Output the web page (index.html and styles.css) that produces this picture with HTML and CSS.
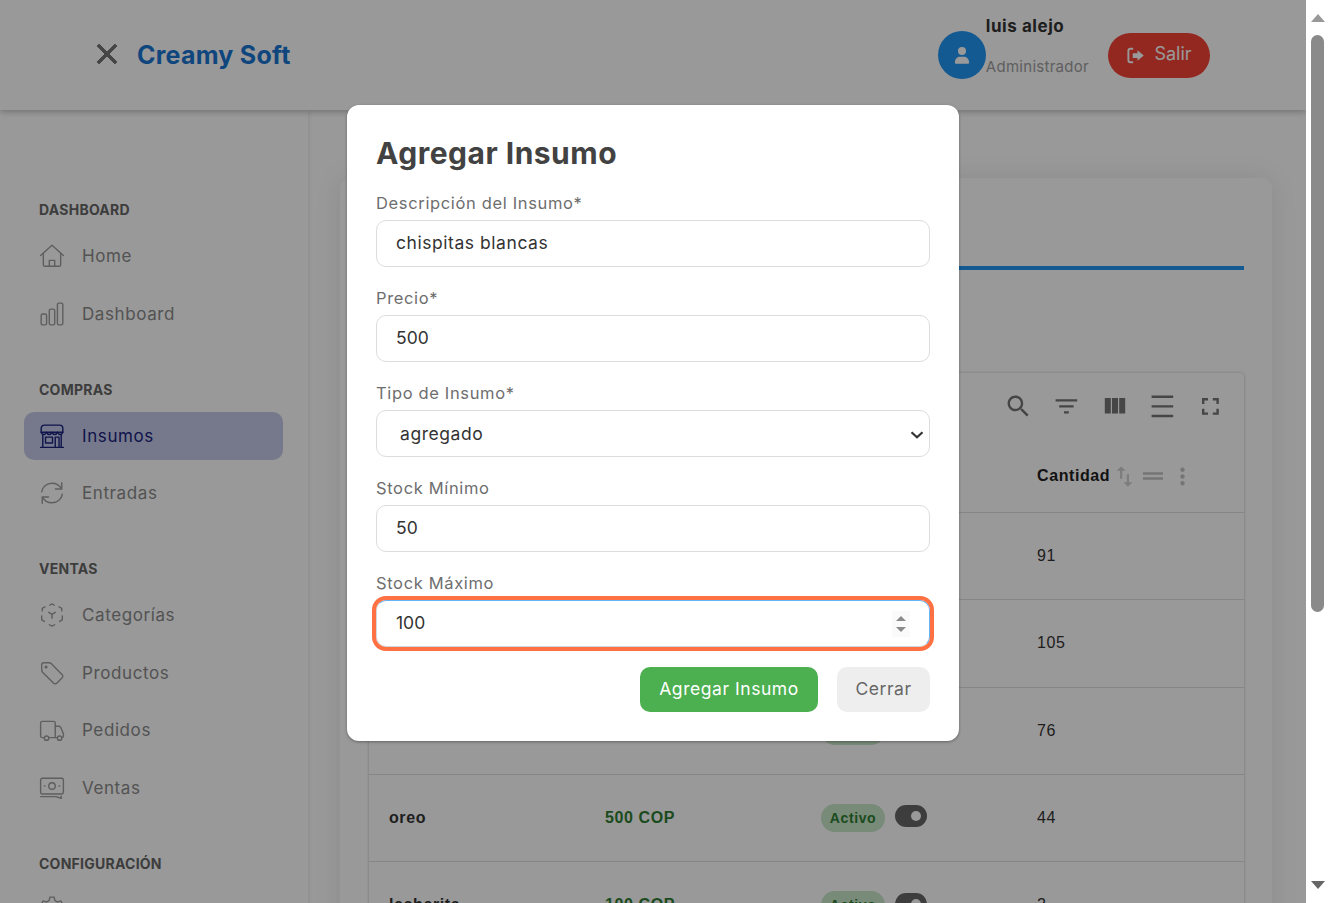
FILE: index.html
```html
<!DOCTYPE html>
<html lang="es">
<head>
    <meta charset="UTF-8">
    <meta name="viewport" content="width=device-width, initial-scale=1.0">
    <title>Creamy Soft - Insumos</title>
    <link rel="stylesheet" href="styles.css">
</head>
<body>
<div class="window">
    <div class="page">
        <header class="topbar">
            <div class="brand">
                <svg class="brand-close" viewBox="0 0 24 24"><path d="M19 6.41 17.59 5 12 10.59 6.41 5 5 6.41 10.59 12 5 17.59 6.41 19 12 13.41 17.59 19 19 17.59 13.41 12z"/></svg>
                <span class="brand-name">Creamy Soft</span>
            </div>
            <div class="account">
                <div class="avatar">
                    <svg viewBox="0 0 24 24"><circle cx="12" cy="7.6" r="4.4"/><path d="M4.2 20.5c0-4.2 2.8-6.6 5.2-6.6h5.2c2.4 0 5.2 2.4 5.2 6.6 0 .7-.5 1-1 1H5.2c-.5 0-1-.3-1-1z"/></svg>
                </div>
                <div class="user">
                    <span class="user-name">luis alejo</span>
                    <span class="user-role">Administrador</span>
                </div>
                <button class="logout">
                    <svg viewBox="0 0 24 24"><path class="logout-door" d="M9 3.5H5.5A2.5 2.5 0 0 0 3 6v12a2.500 2.500 0 0 0 2.500 2.500H9"/><path d="M14.500 5.500 22.500 12l-8 6.500V15H8.500V9h6z"/></svg>
                    <span>Salir</span>
                </button>
            </div>
        </header>

        <div class="body-row">
            <aside class="sidebar">
                <section class="nav-group">
                    <h4>DASHBOARD</h4>
                    <a class="nav-item">
                        <svg viewBox="0 0 24 24"><path d="M1.500 11.500 12 2l10.500 9.500"/><path d="M4 9.500V20a1.500 1.500 0 0 0 1.500 1.500h13A1.500 1.500 0 0 0 20 20V9.500"/><path d="M9.500 21.500V16h5v5.500"/></svg>
                        Home
                    </a>
                    <a class="nav-item">
                        <svg viewBox="0 0 24 24"><rect x="2" y="12" width="5" height="10" rx="1.300"/><rect x="9.500" y="7.500" width="5" height="14.500" rx="1.300"/><rect x="17" y="2" width="5" height="20" rx="1.300"/></svg>
                        Dashboard
                    </a>
                </section>
                <section class="nav-group">
                    <h4>COMPRAS</h4>
                    <a class="nav-item active">
                        <svg viewBox="0 0 24 24"><path d="M5 2h14a3 3 0 0 1 3 3v3.500H2V5a3 3 0 0 1 3-3z"/><path d="M2 8.500c.6 2.800 3.800 2.800 5 0 1 2.800 4 2.800 5 0 1 2.800 4 2.800 5 0 1.200 2.800 4.400 2.800 5 0"/><path d="M3.500 11v11M20.500 11v11M1.500 22.500h21"/><rect x="6" y="13" width="6.500" height="5.500"/><path d="M15 22v-9h3.500v9"/></svg>
                        Insumos
                    </a>
                    <a class="nav-item">
                        <svg viewBox="0 0 24 24"><path d="M2.500 11C3 6.500 7 3 12 3c3.700 0 6.800 1.800 8.500 4.800"/><path d="M21 2.500v5.800h-5.800"/><path d="M21.500 13c-.5 4.500-4.500 8-9.500 8-3.700 0-6.800-1.800-8.500-4.800"/><path d="M3 21.500v-5.800h5.800"/></svg>
                        Entradas
                    </a>
                </section>
                <section class="nav-group">
                    <h4>VENTAS</h4>
                    <a class="nav-item">
                        <svg viewBox="0 0 24 24"><path d="M9.800 3 12 1.800 14.200 3"/><path d="M18.500 4.500 21 5.800v2.500"/><path d="M21.500 12.800v3.700l-2.500 1.400"/><path d="M14.500 21 12 22.300 9.500 21"/><path d="M5 17.900l-2.500-1.400v-3.700"/><path d="M3 8.300V5.800l2.500-1.300"/><path d="M9 9.500l3 2 3-2M12 11.500v3.500"/></svg>
                        Categorías
                    </a>
                    <a class="nav-item">
                        <svg viewBox="0 0 24 24"><path d="M2.500 4.200v5.100c0 .8.300 1.400.8 1.900l10 10c1 1 2.400 1 3.300 0l4.600-4.600c1-1 1-2.300 0-3.300l-10-10c-.5-.5-1.200-.8-1.900-.8H4.200c-1 0-1.700.7-1.700 1.700z"/><circle cx="6.500" cy="6.500" r=".8"/></svg>
                        Productos
                    </a>
                    <a class="nav-item">
                        <svg viewBox="0 0 24 24"><path d="M5 19H3a1.500 1.500 0 0 1-1.500-1.500V5.500A1.500 1.500 0 0 1 3 4h10.500A1.500 1.500 0 0 1 15 5.500V19H9"/><path d="M15 8.500h3.500c.6 0 1 .3 1.300.8l2.700 6V17.500c0 .8-.7 1.500-1.500 1.500H21"/><path d="M15 19h2"/><circle cx="7" cy="19.500" r="2"/><circle cx="19" cy="19.500" r="2"/></svg>
                        Pedidos
                    </a>
                    <a class="nav-item">
                        <svg viewBox="0 0 24 24"><rect x="1.500" y="3" width="21" height="14.500" rx="1.500"/><circle cx="12" cy="10.200" r="3"/><path d="M5 10.200h.5M18.500 10.200h.5"/><path d="M1.500 20h14l5 1.500V19.500"/></svg>
                        Ventas
                    </a>
                </section>
                <section class="nav-group">
                    <h4>CONFIGURACIÓN</h4>
                    <a class="nav-item nav-gear">
                        <svg viewBox="0 0 24 24"><circle cx="12" cy="12" r="3"/><path d="M10 2h4l.6 3 2.600 1.500 2.900-1 2 3.500-2.300 2v2l2.300 2-2 3.500-2.900-1-2.600 1.500-.6 3h-4l-.6-3-2.600-1.500-2.900 1-2-3.500 2.300-2v-2l-2.300-2 2-3.500 2.900 1L9.400 5z"/></svg>
                    </a>
                </section>
            </aside>

            <main class="content">
                <div class="content-inner">
                    <div class="card">
                        <div class="tabs">
                            <span class="tab">Insumos</span>
                        </div>
                        <div class="table-card">
                            <div class="table-tools">
                                <svg viewBox="0 0 24 24"><path d="M15.500 14h-.79l-.28-.27C15.410 12.590 16 11.110 16 9.500 16 5.910 13.090 3 9.500 3S3 5.910 3 9.500 5.910 16 9.500 16c1.610 0 3.090-.59 4.230-1.570l.27.28v.79l5 4.990L20.490 19l-4.990-5zm-6 0C7.010 14 5 11.990 5 9.500S7.010 5 9.500 5 14 7.010 14 9.500 11.990 14 9.500 14z"/></svg>
                                <svg viewBox="0 0 24 24"><path d="M10 18h4v-2h-4v2zM3 6v2h18V6H3zm3 7h12v-2H6v2z"/></svg>
                                <svg viewBox="0 0 24 24"><path d="M10 18h5V5h-5v13zm-6 0h5V5H4v13zM16 5v13h5V5h-5z"/></svg>
                                <svg viewBox="0 0 24 24"><path d="M3 3h18v2H3zM3 11h18v2H3zM3 19h18v2H3z"/></svg>
                                <svg viewBox="0 0 24 24"><path d="M7 14H5v5h5v-2H7v-3zm-2-4h2V7h3V5H5v5zm12 7h-3v2h5v-5h-2v3zM14 5v2h3v3h2V5h-5z"/></svg>
                            </div>
                            <div class="row head">
                                <span>Nombre</span>
                                <span>Precio</span>
                                <span>Estado</span>
                                <span class="head-cell">Cantidad
                                    <svg class="sort" viewBox="0 0 24 24"><path d="M16 17.010V10h-2v7.010h-3L15 21l4-3.990h-3zM9 3 5 6.990h3V14h2V6.990h3L9 3z"/></svg>
                                    <svg class="drag" viewBox="0 0 24 24"><path d="M20 9H4v2h16V9zM4 15h16v-2H4v2z"/></svg>
                                    <svg class="more" viewBox="0 0 24 24"><path d="M12 8c1.100 0 2-.9 2-2s-.9-2-2-2-2 .9-2 2 .9 2 2 2zm0 2c-1.100 0-2 .9-2 2s.9 2 2 2 2-.9 2-2-.9-2-2-2zm0 6c-1.100 0-2 .9-2 2s.9 2 2 2 2-.9 2-2-.9-2-2-2z"/></svg>
                                </span>
                            </div>
                            <div class="row">
                                <b>leche</b><span class="price">300 COP</span>
                                <span class="state"><i class="chip">Activo</i><i class="switch"></i></span><span>91</span>
                            </div>
                            <div class="row">
                                <b>azucar</b><span class="price">200 COP</span>
                                <span class="state"><i class="chip">Activo</i><i class="switch"></i></span><span>105</span>
                            </div>
                            <div class="row">
                                <b>fresa</b><span class="price">400 COP</span>
                                <span class="state"><i class="chip">Activo</i><i class="switch"></i></span><span>76</span>
                            </div>
                            <div class="row">
                                <b>oreo</b><span class="price">500 COP</span>
                                <span class="state"><i class="chip">Activo</i><i class="switch"></i></span><span>44</span>
                            </div>
                            <div class="row">
                                <b>lecherita</b><span class="price">100 COP</span>
                                <span class="state"><i class="chip">Activo</i><i class="switch"></i></span><span>2</span>
                            </div>
                        </div>
                    </div>
                </div>
            </main>
        </div>

        <div class="overlay">
            <form class="modal">
                <h2>Agregar Insumo</h2>
                <div class="field">
                    <label>Descripción del Insumo*</label>
                    <input class="text-input" type="text" value="chispitas blancas">
                </div>
                <div class="field">
                    <label>Precio*</label>
                    <input type="text" value="500">
                </div>
                <div class="field">
                    <label>Tipo de Insumo*</label>
                    <div class="control-wrap">
                        <select><option>agregado</option></select>
                        <svg class="chevron" viewBox="0 0 14 8"><path d="M1.500 1.300 7 6.300l5.500-5"/></svg>
                    </div>
                </div>
                <div class="field">
                    <label>Stock Mínimo</label>
                    <input type="text" value="50">
                </div>
                <div class="field last">
                    <label>Stock Máximo</label>
                    <div class="control-wrap">
                        <input class="focused" type="text" value="100">
                        <span class="stepper"><i class="up"></i><i class="down"></i></span>
                    </div>
                </div>
                <div class="modal-actions">
                    <button type="button" class="btn-add">Agregar Insumo</button>
                    <button type="button" class="btn-close">Cerrar</button>
                </div>
            </form>
        </div>
    </div>

    <div class="scrollbar">
        <i class="arrow-up"></i>
        <div class="thumb-track"><div class="thumb"></div></div>
        <i class="arrow-down"></i>
    </div>
</div>
</body>
</html>
```

FILE: styles.css
```css
* {
    box-sizing: border-box;
}
html, body {
    margin: 0;
    height: 100%;
    overflow: hidden;
}
body {
    font-family: Inter, "Open Sans", sans-serif;
    background: #fff;
    color: #333;
}
.window {
    display: flex;
    height: 903px;
}
.page {
    position: relative;
    flex: 1;
    min-width: 0;
    overflow: hidden;
    background: #fff;
}

/* top bar */
.topbar {
    height: 110px;
    display: flex;
    align-items: center;
    justify-content: space-between;
    padding: 0 96px 0 90px;
    background: #fff;
    box-shadow: 0 2px 6px rgba(0, 0, 0, 0.25);
    position: relative;
    z-index: 1;
}
.brand {
    display: flex;
    align-items: center;
    gap: 13px;
}
.brand-close {
    width: 34px;
    height: 34px;
    margin-top: -2px;
    fill: #757575;
    stroke: #757575;
    stroke-width: 0.7;
}
.brand-name {
    font-size: 25px;
    font-weight: 700;
    letter-spacing: 0.25px;
    color: #1976d2;
}
.account {
    display: flex;
    align-items: center;
}
.avatar {
    width: 48px;
    height: 48px;
    border-radius: 50%;
    background: #2196f3;
    display: flex;
    align-items: center;
    justify-content: center;
}
.avatar svg {
    width: 22px;
    height: 22px;
    fill: #fff;
}
.user {
    display: flex;
    flex-direction: column;
    gap: 21px;
    margin-right: 19px;
    margin-top: -17px;
}
.user-name {
    font-size: 17px;
    line-height: 20px;
    font-weight: 700;
    letter-spacing: 0.55px;
    color: #333;
}
.user-role {
    font-size: 15px;
    line-height: 20px;
    letter-spacing: 0.28px;
    color: #9e9e9e;
}
.logout {
    width: 102px;
    height: 45px;
    border: none;
    border-radius: 23px;
    background: #f44336;
    color: #fff;
    font-family: inherit;
    font-size: 18px;
    display: flex;
    align-items: center;
    justify-content: center;
    gap: 9px;
    padding: 0;
}
.logout span {
    margin-top: -3px;
}
.logout svg {
    width: 19px;
    height: 19px;
    fill: #fff;
}
.logout-door {
    fill: none;
    stroke: #fff;
    stroke-width: 2.4;
}

/* sidebar */
.body-row {
    display: flex;
    height: 1400px;
}
.sidebar {
    width: 308px;
    flex: none;
    padding: 89px 25px 0 24px;
    background: #fff;
    box-shadow: 2px 0 3px rgba(0, 0, 0, 0.06);
    position: relative;
}
.nav-group {
    margin-bottom: 41px;
}
.nav-group h4 {
    margin: 0 0 11px;
    padding-left: 15px;
    font-size: 14px;
    line-height: 22px;
    font-weight: 700;
    letter-spacing: 0.25px;
    color: #666;
}
.nav-item {
    height: 48px;
    margin-bottom: 9.500px;
    display: flex;
    align-items: center;
    gap: 17px;
    padding-left: 15px;
    border-radius: 10px;
    font-size: 17px;
    letter-spacing: 0.6px;
    color: #8a8a8a;
}
.nav-item svg {
    width: 26px;
    height: 26px;
    flex: none;
    fill: none;
    stroke: #9e9e9e;
    stroke-width: 1.3;
    stroke-linecap: round;
    stroke-linejoin: round;
}
.nav-item.active {
    background: #c5cae9;
    color: #1a237e;
}
.nav-item.active svg {
    stroke: #1a237e;
}
.nav-item:last-child {
    margin-bottom: 0;
}
.nav-gear {
    margin-top: -2px;
}

/* main content */
.content {
    flex: 1;
    min-width: 0;
    padding: 40px 5px 0 4px;
}
.content-inner {
    height: 100%;
    overflow: hidden;
    padding: 28px 29px 0 28px;
    background: #fff;
}
.card {
    height: 100%;
    padding: 0 28px 0 29px;
    border-radius: 10px;
    background: #fff;
    box-shadow: 0 0 28px rgba(0, 0, 0, 0.09);
}
.tabs {
    height: 92px;
    border-bottom: 4px solid #2196f3;
    margin-bottom: 103px;
    display: flex;
    align-items: flex-end;
    padding: 0 0 12px 20px;
    color: #1976d2;
    font-size: 16px;
}
.table-card {
    border-radius: 4px;
    background: #fff;
    box-shadow: 0 0 3px rgba(0, 0, 0, 0.25);
    font-family: "Liberation Sans", Arial, sans-serif;
    font-size: 16px;
    letter-spacing: 0.6px;
}
.table-tools {
    height: 67px;
    display: flex;
    justify-content: flex-end;
    align-items: center;
    gap: 19.200px;
    padding-right: 19.600px;
}
.table-tools svg {
    width: 28.800px;
    height: 28.800px;
    fill: #757575;
}
.row {
    height: 87.250px;
    display: grid;
    grid-template-columns: 216px 216px 216px 1fr;
    align-items: center;
    padding-left: 20px;
    border-bottom: 1px solid #e0e0e0;
    color: #333;
}
.row b {
    font-weight: 700;
    color: #333;
}
.row.head {
    height: 73px;
    font-weight: 700;
    color: #212121;
}
.head-cell {
    display: flex;
    align-items: center;
}
.sort {
    width: 27px;
    height: 27px;
    margin-left: 1px;
    fill: #d0d0d0;
}
.drag {
    width: 30px;
    height: 30px;
    fill: #c4c4c4;
}
.more {
    width: 27px;
    height: 27px;
    margin-left: 1px;
    fill: #c4c4c4;
}
.price {
    font-weight: 700;
    color: #2e7d32;
}
.state {
    display: flex;
    align-items: center;
    gap: 10px;
}
.chip {
    width: 64px;
    height: 28px;
    line-height: 28px;
    text-align: center;
    border-radius: 14px;
    background: #c8e6c9;
    color: #2e7d32;
    font-size: 14px;
    font-style: normal;
    font-weight: 700;
}
.switch {
    position: relative;
    width: 32px;
    height: 22px;
    border-radius: 11px;
    background: #666;
    margin-top: -3px;
}
.switch::after {
    content: "";
    position: absolute;
    top: 6px;
    right: 6px;
    width: 10px;
    height: 10px;
    border-radius: 50%;
    background: #fff;
}

/* modal */
.overlay {
    position: absolute;
    inset: 0;
    z-index: 2;
    display: flex;
    justify-content: center;
    align-items: flex-start;
    padding-top: 105px;
    background: rgba(0, 0, 0, 0.4);
}
.modal {
    width: 612px;
    height: 636px;
    padding: 26px 29px 0;
    border-radius: 12px;
    background: #fff;
    box-shadow: 0 1px 3px rgba(0, 0, 0, 0.35);
}
.modal h2 {
    margin: 0 0 18px;
    font-size: 30px;
    line-height: 44px;
    font-weight: 700;
    letter-spacing: 0.5px;
    color: #424242;
}
.field {
    height: 95px;
    display: flex;
    flex-direction: column;
}
.field.last {
    height: 94px;
}
.field label {
    height: 27px;
    line-height: 20px;
    font-size: 16.500px;
    letter-spacing: 0.65px;
    color: #6e6e6e;
}
.field input,
.field select {
    width: 100%;
    height: 47px;
    padding: 0 19px 2px;
    border: 1px solid #ddd;
    border-radius: 10px;
    background: #fff;
    font-family: inherit;
    font-size: 17.500px;
    color: #333;
    outline: none;
}
.field input.text-input,
.field select {
    letter-spacing: 0.55px;
}
.field select {
    appearance: none;
    padding: 0 5px 0 23px;
}
.control-wrap {
    position: relative;
}
.chevron {
    position: absolute;
    top: 21px;
    right: 6px;
    width: 14px;
    height: 8px;
    fill: none;
    stroke: #333;
    stroke-width: 2.200;
}
.field input.focused {
    border-color: #64b5f6 #64b5f6 #cfd8dc #cfd8dc;
    outline: 4px solid #ff7043;
    outline-offset: 0;
}
.stepper {
    position: absolute;
    top: 11px;
    right: 20px;
    width: 18px;
    height: 26px;
    padding: 5px 0;
    background: #fafafa;
    display: flex;
    flex-direction: column;
    justify-content: space-between;
    align-items: center;
}
.stepper i {
    width: 0;
    height: 0;
    border-left: 5px solid transparent;
    border-right: 5px solid transparent;
}
.stepper .up {
    border-bottom: 5.500px solid #8a8a8a;
}
.stepper .down {
    border-top: 5.500px solid #8a8a8a;
}
.modal-actions {
    display: flex;
    justify-content: flex-end;
    gap: 19px;
}
.modal-actions button {
    height: 45px;
    border: none;
    border-radius: 10px;
    padding: 0 0 3px;
    font-family: inherit;
    font-size: 17.500px;
    letter-spacing: 0.55px;
}
.btn-add {
    width: 178px;
    background: #4caf50;
    color: #fff;
}
.btn-close {
    width: 93px;
    background: #eee;
    color: #666;
}

/* the browser scrollbar, drawn */
.scrollbar {
    width: 23px;
    flex: none;
    background: #fff;
    display: flex;
    flex-direction: column;
    align-items: center;
    padding: 14px 5px 14px 5px;
}
.arrow-up,
.arrow-down {
    width: 0;
    height: 0;
    border-left: 7.500px solid transparent;
    border-right: 7.500px solid transparent;
}
.arrow-up {
    border-bottom: 8px solid #999;
}
.arrow-down {
    border-top: 8px solid #666;
}
.thumb-track {
    flex: 1;
    width: 100%;
    padding-top: 13px;
}
.thumb {
    width: 13px;
    height: 577px;
    border-radius: 7px;
    background: #8a8a8a;
}
```
